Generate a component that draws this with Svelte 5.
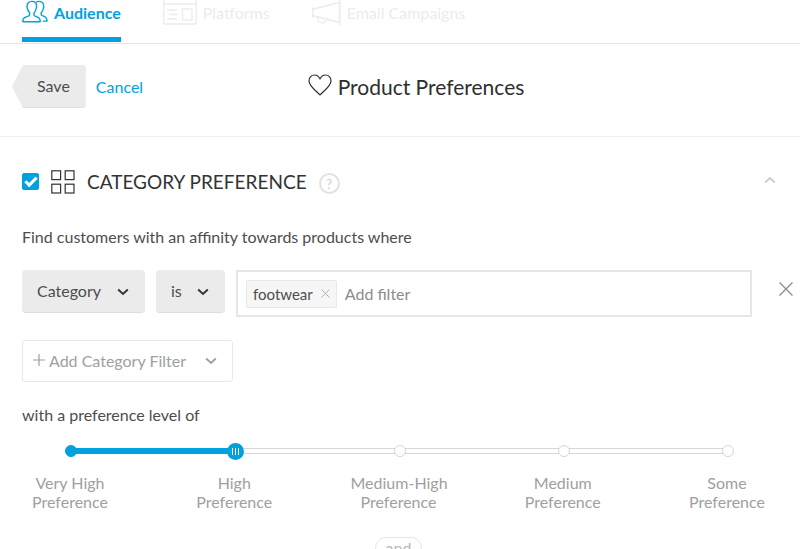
<script lang="ts">
  const levels = [
    ["Very High", "Preference"],
    ["High", "Preference"],
    ["Medium-High", "Preference"],
    ["Medium", "Preference"],
    ["Some", "Preference"],
  ];

  let enabled = $state(true);
  let level = $state(1);
  let filters = $state(["footwear"]);
  let draft = $state("");

  const fill = $derived((level / (levels.length - 1)) * 100);

  function addFilter(event: KeyboardEvent) {
    if (event.key !== "Enter" || !draft.trim()) return;
    filters = [...filters, draft.trim()];
    draft = "";
  }

  function removeFilter(name: string) {
    filters = filters.filter((item) => item !== name);
  }
</script>

{#snippet chevron()}
  <svg class="chevron" width="12" height="8" viewBox="0 0 12 8" aria-hidden="true">
    <path d="M1.2 1.5 6 5.9l4.8-4.4" fill="none" stroke="currentColor" stroke-width="1.9" />
  </svg>
{/snippet}

<div class="page">
  <nav class="tabs">
    <a class="tab active" href="#audience">
      <svg width="26" height="24" viewBox="0 0 26 24" fill="none" stroke="currentColor" stroke-width="1.4" stroke-linejoin="round" aria-hidden="true">
        <path d="M9.800 1.400C6.900 1.400 5 3.300 5 6.200c0 1 .1 1.700.4 2.300.4 2 1.200 3.300 2.200 4.300v2.400c0 1.200-5.800 1.500-6.500 4.200L.8 21.700h17.400l-.3-2.300c-.6-2.700-5.900-3-5.900-4.200v-2.400c1-1 1.900-2.300 2.200-4.300.3-.6.4-1.300.4-2.300 0-2.900-1.900-4.800-4.800-4.800Z" />
        <path d="M14 2.300c.8-.6 1.900-.9 3-.9 2.900 0 4.700 1.900 4.700 4.800 0 1-.1 1.700-.4 2.300-.3 1.900-1.100 3.200-2.100 4.200v2c0 1.200 5 1.500 5.500 4.200l.3 2.200h-4.200" />
      </svg>
      Audience
    </a>
    <a class="tab" href="#platforms">
      <svg width="34" height="25" viewBox="0 0 34 25" fill="none" stroke="currentColor" stroke-width="1.4" aria-hidden="true">
        <rect x=".7" y="-6" width="32.6" height="30" rx="1" />
        <path d="M1 4h32M4 10h10M6 14.500h9M4 19h10" />
        <rect x="19.500" y="9" width="9.500" height="11" />
      </svg>
      Platforms
    </a>
    <a class="tab" href="#email">
      <svg width="29" height="25" viewBox="0 0 29 25" fill="none" stroke="currentColor" stroke-width="1.4" aria-hidden="true">
        <path d="M.7 7.500v10M.7 9.300 27.500 2.500V22.500L.7 15.500M27.800 0v25" />
        <path d="M6 17.300v1.500a4.300 4.300 0 0 0 8.600 0v.5" />
      </svg>
      Email Campaigns
    </a>
  </nav>

  <header class="bar">
    <div class="actions">
      <button class="save" type="button">Save</button>
      <a class="cancel" href="#cancel">Cancel</a>
    </div>
    <h1>
      <svg width="24" height="26" viewBox="0 0 24 26" fill="none" stroke="currentColor" stroke-width="1.2" stroke-linejoin="round" aria-hidden="true">
        <path d="M12 21C9.500 17.800 1 12.800 1 6.800 1 3.300 3.500 1 6.400 1 9 1 11 2.600 12 4.900 13 2.600 15 1 17.600 1 20.500 1 23 3.300 23 6.800 23 12.800 14.500 17.800 12 21Z" />
      </svg>
      Product Preferences
    </h1>
  </header>

  <main>
    <div class="heading">
      <input class="check" id="category-on" type="checkbox" bind:checked={enabled} />
      <svg width="24" height="24" viewBox="0 0 24 24" fill="none" stroke="currentColor" stroke-width="1.2" aria-hidden="true">
        <rect x=".8" y=".8" width="8.800" height="8.800" />
        <rect x="14.200" y=".8" width="8.800" height="8.800" />
        <rect x=".8" y="14.200" width="8.800" height="8.800" />
        <rect x="14.200" y="14.200" width="8.800" height="8.800" />
      </svg>
      <h2><label for="category-on">CATEGORY PREFERENCE</label></h2>
      <button class="help" type="button" aria-label="Help">?</button>
      <button class="collapse" type="button" aria-label="Collapse">
        <svg width="12" height="12" viewBox="0 0 12 12" fill="none" stroke="currentColor" stroke-width="1.8" aria-hidden="true">
          <path d="M1.200 6.500 6 2l4.800 4.500" />
        </svg>
      </button>
    </div>

    <p class="lead">Find customers with an affinity towards products where</p>

    <div class="rule">
      <div class="picker">
        <select class="field" aria-label="Attribute"><option>Category</option></select>
        {@render chevron()}
      </div>
      <div class="picker">
        <select class="operator" aria-label="Operator"><option>is</option></select>
        {@render chevron()}
      </div>
      <div class="values">
        {#each filters as name}
          <span class="tag">
            {name}
            <button type="button" aria-label="Remove {name}" onclick={() => removeFilter(name)}>
              <svg width="9" height="9" viewBox="0 0 9 9" stroke="currentColor" aria-hidden="true">
                <path d="m.5.5 8 8m0-8-8 8" />
              </svg>
            </button>
          </span>
        {/each}
        <input type="text" placeholder="Add filter" aria-label="Add filter" bind:value={draft} onkeydown={addFilter} />
      </div>
      <button class="drop" type="button" aria-label="Remove rule">
        <svg width="14" height="14" viewBox="0 0 14 14" stroke="currentColor" stroke-width="1.3" aria-hidden="true">
          <path d="m.5.5 13 13m0-13-13 13" />
        </svg>
      </button>
    </div>

    <button class="add" type="button">
      <svg width="12" height="14" viewBox="0 0 12 14" stroke="currentColor" stroke-width="1.2" aria-hidden="true">
        <path d="M6 0v12M0 6h12" />
      </svg>
      <span>Add Category Filter</span>
      {@render chevron()}
    </button>

    <label class="lead" for="level">with a preference level of</label>

    <div class="slider">
      <div class="rail">
        <div class="line"></div>
        <div class="stops">
          {#each levels as _, i}
            <span class="stop" class:reached={i <= level}></span>
          {/each}
        </div>
        <div class="fill" style="width: {fill}%"></div>
        <input id="level" type="range" min="0" max={levels.length - 1} bind:value={level} />
      </div>
      <div class="labels">
        {#each levels as [first, second]}
          <span>{first}<br />{second}</span>
        {/each}
      </div>
    </div>

    <div class="joiner"><span>and</span></div>
  </main>
</div>

<style>
  :global(body) {
    background: #fff;
    overflow: hidden;
  }

  .page {
    font-family: Lato, sans-serif;
    font-size: 16px;
    line-height: 20px;
    color: #4d4d4d;
  }

  button,
  input,
  select {
    font: inherit;
    color: inherit;
    margin: 0;
    box-sizing: border-box;
  }

  button {
    padding: 0;
    border: 0;
    background: none;
    cursor: pointer;
  }

  svg {
    display: block;
    flex: none;
  }

  a {
    color: #00a1df;
    text-decoration: none;
  }

  /* Tabs */
  .tabs {
    display: flex;
    gap: 42px;
    height: 43px;
    padding: 0 22px;
    border-bottom: 1px solid #e6e6e6;
  }

  .tab {
    display: flex;
    align-items: flex-start;
    gap: 6px;
    box-sizing: border-box;
    height: 42px;
    line-height: 26px;
    color: #ececec;
  }

  .tab.active {
    color: #00a1df;
    font-weight: 700;
    border-bottom: 5px solid #00a1df;
  }

  /* Title bar */
  .bar {
    display: grid;
    grid-template-columns: 1fr auto 1fr;
    align-items: center;
    padding: 21px 12px 28px;
    border-bottom: 1px solid #f0f0f0;
  }

  .actions {
    display: flex;
    align-items: center;
    gap: 10px;
  }

  .save {
    height: 43px;
    padding: 0 16px 0 25px;
    background: #ebebeb;
    border-bottom: 1px solid #dedede;
    border-radius: 4px;
    clip-path: polygon(0 50%, 11px 0, 100% 0, 100% 100%, 11px 100%);
  }

  h1 {
    display: flex;
    align-items: center;
    gap: 6px;
    margin: 0 0 0 32px;
    font-size: 21px;
    font-weight: 400;
    color: #2e2e2e;
  }

  /* Section */
  main {
    padding: 32px 22px 0;
  }

  .heading {
    display: flex;
    align-items: center;
    gap: 12px;
    height: 25px;
    color: #333;
  }

  .check {
    appearance: none;
    display: grid;
    place-items: center;
    width: 17px;
    height: 17px;
    border: 1px solid #00a1df;
    border-radius: 2px;
  }

  .check:checked {
    background: #00a1df;
  }

  .check:checked::before {
    content: "";
    width: 12px;
    height: 7px;
    border: solid #fff;
    border-width: 0 0 3px 3px;
    box-sizing: border-box;
    transform: translateY(-1px) rotate(-45deg);
  }

  h2 {
    margin: 0;
    font-size: 19px;
    font-weight: 400;
  }

  .help {
    align-self: flex-end;
    width: 21px;
    height: 21px;
    border: 2px solid #e2e2e2;
    border-radius: 50%;
    color: #d0d0d0;
    font-size: 14px;
    line-height: 17px;
  }

  .collapse {
    margin-left: auto;
    margin-right: 2px;
    color: #ccc;
  }

  .lead {
    display: block;
    margin: 33px 0 0;
  }

  .rule {
    display: flex;
    align-items: flex-start;
    margin-top: 23px;
  }

  .picker {
    display: grid;
    align-items: center;
    margin-right: 11px;
  }

  .picker > :global(*) {
    grid-area: 1 / 1;
  }

  .picker .chevron {
    justify-self: end;
    margin-right: 16px;
    pointer-events: none;
    color: #333;
  }

  .picker select {
    appearance: none;
    height: 43px;
    padding: 0 43px 0 15px;
    border: 0;
    border-bottom: 1px solid #dedede;
    border-radius: 4px;
    background: #ebebeb;
  }

  .values {
    display: flex;
    flex: 1;
    align-items: center;
    gap: 8px;
    box-sizing: border-box;
    min-width: 0;
    height: 47px;
    padding: 0 8px;
    border: 2px solid #e6e6e6;
  }

  .tag {
    display: flex;
    align-items: center;
    gap: 8px;
    box-sizing: border-box;
    height: 28px;
    padding: 0 6px;
    border: 1px solid #e8e8e8;
    border-radius: 2px;
    background: #f6f6f6;
    font-size: 15px;
  }

  .tag button {
    color: #b0b0b0;
  }

  .values input {
    flex: 1;
    min-width: 0;
    padding: 0;
    border: 0;
    outline: 0;
    background: none;
  }

  .values input::placeholder {
    color: #8c8c8c;
    opacity: 1;
  }

  .drop {
    margin: 12px -15px 0 27px;
    color: #8c8c8c;
  }

  .add {
    display: flex;
    align-items: center;
    gap: 4px;
    height: 42px;
    margin-top: 23px;
    padding: 0 15px 0 10px;
    border: 1px solid #e8e8e8;
    border-radius: 3px;
    color: #a0a0a0;
  }

  .add .chevron {
    margin-left: 15px;
  }

  .add + .lead {
    margin-top: 23px;
  }

  /* Slider */
  .slider {
    margin: 17px 3px 0 0;
  }

  .rail {
    position: relative;
    height: 18px;
    margin: 0 41px 0 43px;
  }

  .line,
  .fill,
  .stops,
  .rail input {
    position: absolute;
    left: 0;
  }

  .line {
    top: 6px;
    right: 0;
    height: 4px;
    margin: 0 6px;
    border: 1px solid #d6d6d6;
  }

  .fill {
    top: 6px;
    height: 6px;
    margin-left: 6px;
    background: #00a1df;
  }

  .stops {
    top: 3px;
    right: 0;
    display: flex;
    justify-content: space-between;
  }

  .stop {
    box-sizing: border-box;
    width: 12px;
    height: 12px;
    border: 1px solid #d6d6d6;
    border-radius: 50%;
    background: #fff;
  }

  .stop.reached {
    border-color: #00a1df;
    background: #00a1df;
  }

  .rail input {
    appearance: none;
    top: 1px;
    width: calc(100% + 6px);
    height: 17px;
    margin-left: -3px;
    background: none;
  }

  .rail input::-webkit-slider-thumb {
    appearance: none;
    width: 17px;
    height: 17px;
    border-radius: 50%;
    background:
      linear-gradient(90deg, #fff 1px, transparent 1px 3px, #fff 3px 4px, transparent 4px 6px, #fff 6px) center / 7px 7px no-repeat,
      #00a1df;
  }

  .labels {
    display: flex;
    justify-content: space-between;
    margin-top: 13px;
    color: #a0a0a0;
    line-height: 19px;
    text-align: center;
  }

  .labels span {
    width: 96px;
    white-space: nowrap;
  }

  .joiner {
    display: flex;
    justify-content: center;
    margin: 26px 3px 0 0;
  }

  .joiner span {
    padding: 0 10px;
    border: 1px solid #e6e6e6;
    border-radius: 12px;
    color: #b8b8b8;
  }
</style>
